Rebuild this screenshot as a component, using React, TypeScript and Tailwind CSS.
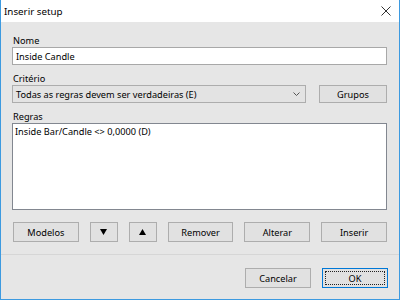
import type { ReactNode } from 'react';

const Btn = ({ children, className = 'w-[66px]' }: { children: ReactNode; className?: string }) => (
  <div
    className={`h-[20px] flex items-center justify-center bg-[#e1e1e1] border border-[#adadad] text-black ${className}`}
  >
    {children}
  </div>
);

const Tri = ({ up }: { up?: boolean }) => (
  <svg width="7" height="6" viewBox="0 0 7 6">
    <polygon points={up ? '3.5,0 7,6 0,6' : '0,0 7,0 3.5,6'} fill="#000" />
  </svg>
);

export default function App() {
  return (
    <div
      className="w-[400px] h-[300px] flex flex-col border-x border-b border-[#3d9ae0] bg-[#e6e6e6] text-[9.2px] leading-[13px] text-black"
      style={{ fontFamily: '"Noto Sans", sans-serif' }}
    >
      {/* title bar */}
      <div className="h-[22px] bg-white flex items-center justify-between pl-[3px] pr-[8px] shrink-0">
        <span className="text-[9.8px]">Inserir setup</span>
        <svg width="10" height="10" viewBox="0 0 10 10">
          <path d="M0.5 0.5 L9.5 9.5 M9.5 0.5 L0.5 9.5" stroke="#333" strokeWidth="1" />
        </svg>
      </div>

      <div className="flex flex-col pl-[11px] pr-[12px] pt-[12px]">
        <div className="pl-[1px] h-[13px]">Nome</div>
        <div className="h-[18px] bg-white border border-[#a8a8a8] flex items-center pl-[3px]">Inside Candle</div>

        <div className="pl-[1px] h-[13px] mt-[7px]">Critério</div>
        <div className="flex gap-[13px]">
          <div className="h-[18px] flex-1 bg-[#e3e3e3] border border-[#adadad] flex items-center justify-between pl-[3px] pr-[5px]">
            <span>Todas as regras devem ser verdadeiras (E)</span>
            <svg width="7" height="4" viewBox="0 0 7 4">
              <path d="M0.5 0.5 L3.5 3.5 L6.5 0.5" stroke="#555" strokeWidth="1" fill="none" />
            </svg>
          </div>
          <div className="h-[18px] w-[68px] bg-[#e1e1e1] border border-[#adadad] flex items-center justify-center">Grupos</div>
        </div>

        <div className="pl-[1px] h-[13px] mt-[7px]">Regras</div>
        <div className="h-[87px] bg-white border border-[#828790] pl-[2px] pt-[1px]">Inside Bar/Candle &lt;&gt; 0,0000 (D)</div>

        <div className="flex items-center gap-[11px] mt-[12px] pl-[1px]">
          <Btn>Modelos</Btn>
          <Btn className="w-[28px]"><Tri /></Btn>
          <Btn className="w-[28px]"><Tri up /></Btn>
          <Btn>Remover</Btn>
          <Btn>Alterar</Btn>
          <Btn>Inserir</Btn>
        </div>
      </div>

      <div className="mt-[12px] border-t border-[#d6d6d6]" />

      <div className="flex justify-end gap-[11px] pr-[11px] mt-[13px]">
        <Btn>Cancelar</Btn>
        <div className="h-[20px] w-[66px] bg-[#e1e1e1] border border-[#0078d7] p-[2px]">
          <div className="w-full h-full border border-dotted border-[#222] flex items-center justify-center">OK</div>
        </div>
      </div>
    </div>
  );
}
